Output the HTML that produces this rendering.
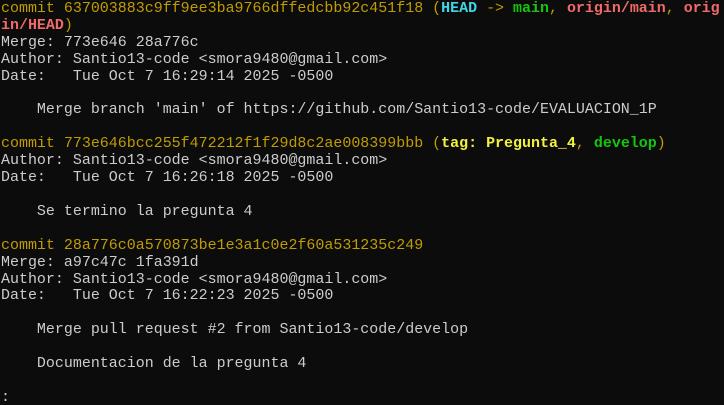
<!DOCTYPE html>
<html><head><meta charset="utf-8"><style>
html,body{margin:0;background:#0c0c0c;width:724px;height:405px;overflow:hidden}
pre{margin:0;padding:0 0 0 1px;font-family:"Liberation Mono",monospace;font-size:14.98px;line-height:16.9px;color:#cccccc;white-space:pre;position:relative;top:1px}
.y{color:#c19c00}.c{color:#3fd6e6;font-weight:bold}.g{color:#16c60c;font-weight:bold}.r{color:#f06a6a;font-weight:bold}.yb{color:#f2f23c;font-weight:bold}
</style></head><body><pre><span class="y">commit 637003883c9ff9ee3ba9766dffedcbb92c451f18 (</span><span class="c">HEAD</span><span class="y"> -&gt; </span><span class="g">main</span><span class="y">, </span><span class="r">origin/main</span><span class="y">, </span><span class="r">orig</span>
<span class="r">in/HEAD</span><span class="y">)</span>
Merge: 773e646 28a776c
Author: Santio13-code &lt;smora9480@gmail.com&gt;
Date:   Tue Oct 7 16:29:14 2025 -0500

    Merge branch 'main' of https://github.com/Santio13-code/EVALUACION_1P

<span class="y">commit 773e646bcc255f472212f1f29d8c2ae008399bbb (</span><span class="yb">tag: Pregunta_4</span><span class="y">, </span><span class="g">develop</span><span class="y">)</span>
Author: Santio13-code &lt;smora9480@gmail.com&gt;
Date:   Tue Oct 7 16:26:18 2025 -0500

    Se termino la pregunta 4

<span class="y">commit 28a776c0a570873be1e3a1c0e2f60a531235c249</span>
Merge: a97c47c 1fa391d
Author: Santio13-code &lt;smora9480@gmail.com&gt;
Date:   Tue Oct 7 16:22:23 2025 -0500

    Merge pull request #2 from Santio13-code/develop

    Documentacion de la pregunta 4

:</pre></body></html>
